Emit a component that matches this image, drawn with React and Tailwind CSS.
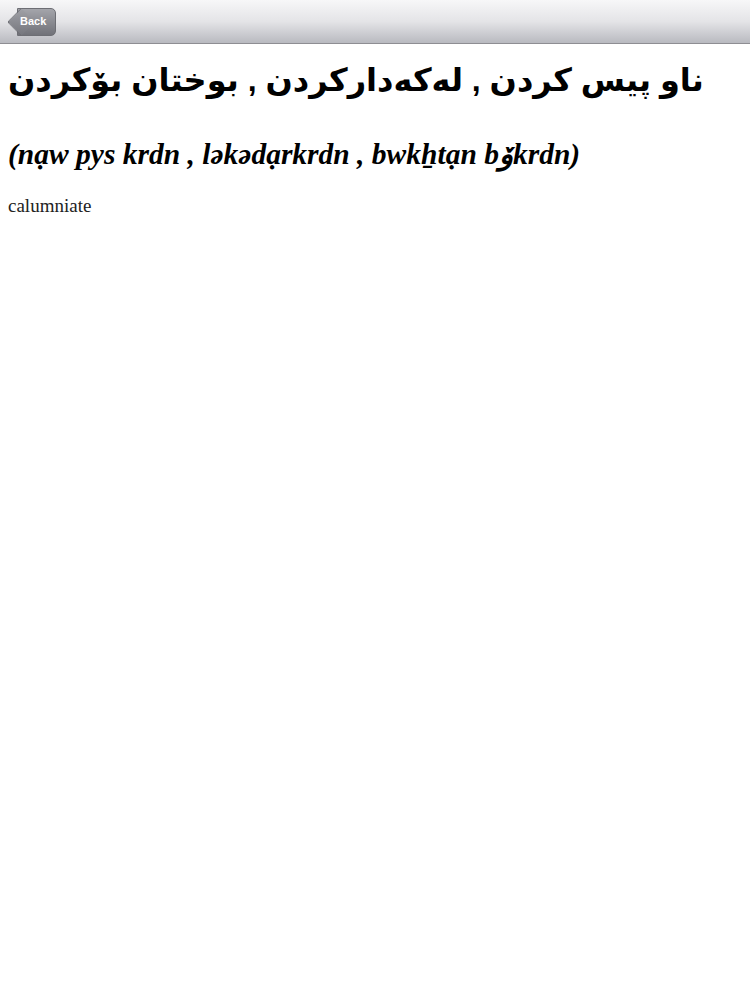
import React from "react";

const App = () => {
  return (
    <div className="min-h-screen w-[750px] bg-white">
      {/* top bar */}
      <div className="flex h-[44px] items-center border-b border-[#8e8e93] bg-gradient-to-b from-[#f7f7f8] via-[#e4e4e7] to-[#b9bac0] px-[7px]">
        <button className="relative ml-[10px] flex h-[28px] items-center rounded-r-[5px] border border-[#6d6e74] bg-gradient-to-b from-[#a4a5ab] to-[#717279] pl-[2px] pr-[9px] text-[11px] font-bold text-white [font-family:'Liberation_Sans',Arial,sans-serif]">
          <span className="absolute left-[-7px] top-[3px] h-[20px] w-[20px] rotate-45 rounded-bl-[3px] border-b border-l border-[#6d6e74] bg-gradient-to-br from-[#a0a1a7] to-[#75767d]" />
          <span className="relative">Back</span>
        </button>
      </div>

      <div className="px-2">
        <h1
          dir="ltr"
          className="mt-[14px] whitespace-nowrap text-left text-[32px] font-bold leading-[44px] text-black [font-family:'Liberation_Sans','DejaVu_Sans',sans-serif]"
        >
          <span dir="rtl">ناو پیس کردن , لەکەدارکردن , بوختان بۆکردن</span>
        </h1>
        <h2 className="mt-[35px] text-[29.5px] font-bold italic leading-[34px] text-black [font-family:'Liberation_Serif','DejaVu_Serif',serif]">
          (nạw pys krdn , lәkәdạrkrdn , bwkẖtạn bۆkrdn)
        </h2>
        <p className="mt-[24px] text-[19px] leading-[22px] text-[#222] [font-family:'Liberation_Serif',serif]">
          calumniate
        </p>
      </div>
    </div>
  );
};

export default App;
